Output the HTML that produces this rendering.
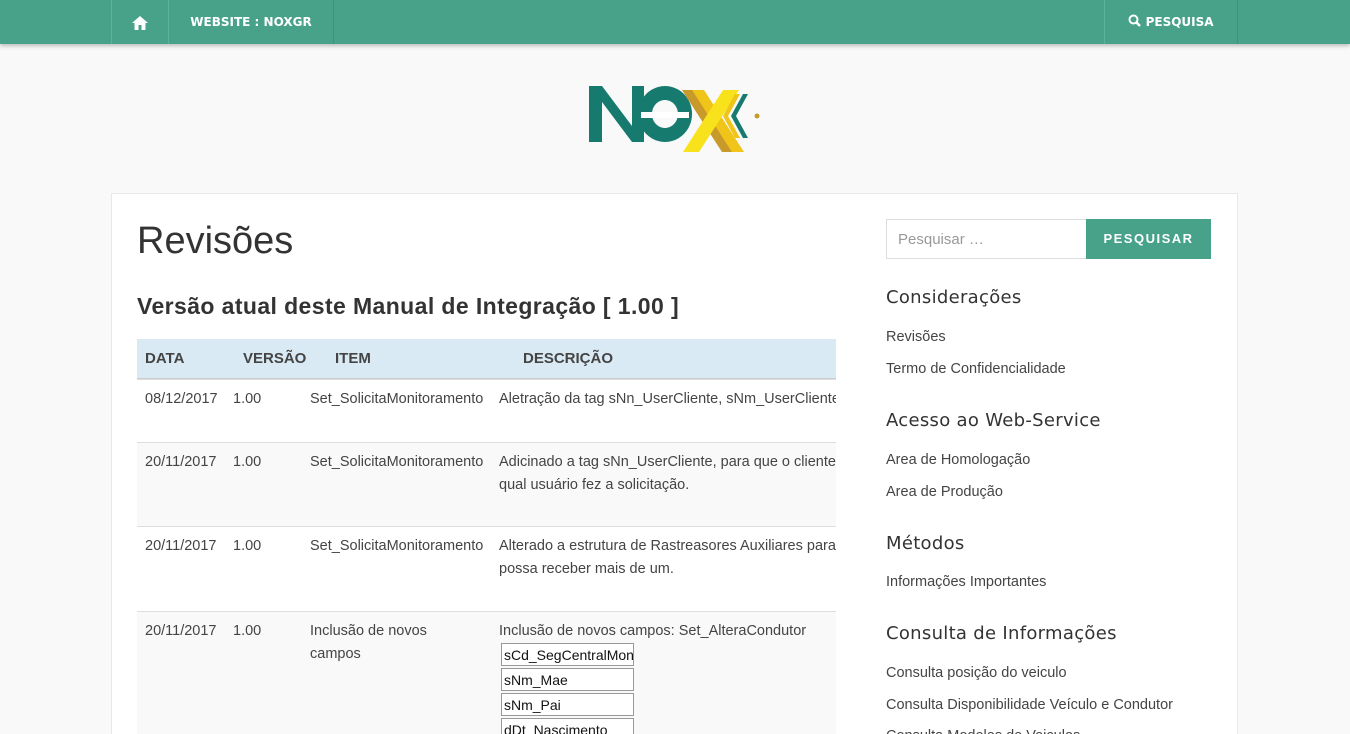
<!DOCTYPE html>
<html style="overflow:hidden;height:734px"><head><meta charset="utf-8">
<style>
body{margin:0;background:#f9f9f9;font-family:"Liberation Sans",sans-serif;color:#333;width:1350px;height:734px;overflow:hidden;position:relative}
.nav{position:absolute;left:0;top:0;width:1350px;height:44px;background:#48a28a;box-shadow:0 2px 4px rgba(0,0,0,.25);z-index:2}
.nav .it{position:absolute;top:0;height:44px;border-left:1px solid #5cb39c;border-right:1px solid #3d937c;color:#fff;font-weight:bold;font-size:13px;line-height:44px;text-align:center;font-family:"DejaVu Sans",sans-serif;font-size:12px}
.box{position:absolute;left:111px;top:193px;width:1125px;height:560px;background:#fff;border:1px solid #e8e8e8}
h1{position:absolute;left:137px;top:220px;margin:0;font-weight:normal;font-size:38px;color:#333}
h2{position:absolute;left:137px;top:293px;margin:0;font-size:23px;font-weight:bold;color:#333;letter-spacing:0.4px}
.tbl{position:absolute;left:137px;top:339px;width:699px;overflow:hidden;height:400px}
.row{position:relative;border-top:1px solid #ddd;font-size:14.5px;color:#444}
.row span{position:absolute;line-height:23px}
.hd{height:39px;background:#d9eaf4;font-weight:bold;font-size:15px;color:#444;border-bottom:1px solid #ccc;position:relative}
.hd span{position:absolute;top:11px}
.side{position:absolute;left:886px;font-size:14.5px;color:#444}
.sh{font-size:18px;color:#333;font-family:"DejaVu Sans",sans-serif;letter-spacing:0.3px}
.fld{position:absolute;left:501px;width:129px;height:21px;border:1px solid #999;background:#fff;font-size:14px;line-height:22px;padding-left:2px;overflow:hidden;white-space:nowrap;color:#111}
</style></head><body>
<div class="nav">
 <div class="it" style="left:111px;width:56px"><svg width="18" height="16" viewBox="0 0 18 16" style="vertical-align:middle"><path d="M9 1L1 8h2.5v7h4v-5h3v5h4V8H17z" fill="#fff"/></svg></div>
 <div class="it" style="left:168px;width:164px">WEBSITE : NOXGR</div>
 <div class="it" style="left:1104px;width:132px"><svg width="13" height="13" viewBox="0 0 13 13" style="vertical-align:-1px"><circle cx="5.5" cy="5.5" r="4" stroke="#fff" stroke-width="2" fill="none"/><path d="M8.5 8.5L12 12" stroke="#fff" stroke-width="2.5"/></svg> PESQUISA</div>
</div>
<svg style="position:absolute;left:585px;top:80px" width="180" height="78" viewBox="0 0 180 78">
 <path d="M4 6h13l30 40V6h12v56H47L17 22v40H4z" fill="#167a6e"/>
 <path d="M80 6a27 28 0 1 0 0.1 0zM80 20a13 14 0 1 1 -0.1 0z" fill="#167a6e" fill-rule="evenodd"/>
 <path d="M56 32h48v6H56z" fill="#fff"/>
 <path d="M97 10h16l40 62h-16z" fill="#c79a2a"/>
 <path d="M107 10h12l40 62h-12z" fill="#f0c419"/>
 <path d="M138 10h16l-40 62h-16z" fill="#f7e21c"/>
 <path d="M150 14l-12 22 12 22h5l-12-22 12-22z" fill="#f0c419"/>
 <path d="M158 14l-12 22 12 22h5l-12-22 12-22z" fill="#167a6e"/>
 <circle cx="172" cy="36" r="2.5" fill="#c79a2a"/>
</svg>
<div class="box"></div>
<h1>Revisões</h1>
<h2>Versão atual deste Manual de Integração [ 1.00 ]</h2>
<div class="tbl">
 <div class="hd"><span style="left:8px">DATA</span><span style="left:106px">VERSÃO</span><span style="left:198px">ITEM</span><span style="left:386px">DESCRIÇÃO</span></div>
 <div class="row" style="height:62px;background:#fff"><span style="left:8px;top:8px">08/12/2017</span><span style="left:96px;top:8px">1.00</span><span style="left:173px;top:8px">Set_SolicitaMonitoramento</span><span style="left:362px;top:8px;white-space:nowrap">Aletração da tag sNn_UserCliente, sNm_UserCliente</span></div>
 <div class="row" style="height:83px;background:#f9f9f9"><span style="left:8px;top:8px">20/11/2017</span><span style="left:96px;top:8px">1.00</span><span style="left:173px;top:8px">Set_SolicitaMonitoramento</span><span style="left:362px;top:8px;white-space:nowrap">Adicinado a tag sNn_UserCliente, para que o cliente<br>qual usuário fez a solicitação.</span></div>
 <div class="row" style="height:84px;background:#fff"><span style="left:8px;top:8px">20/11/2017</span><span style="left:96px;top:8px">1.00</span><span style="left:173px;top:8px">Set_SolicitaMonitoramento</span><span style="left:362px;top:8px;white-space:nowrap">Alterado a estrutura de Rastreasores Auxiliares para<br>possa receber mais de um.</span></div>
 <div class="row" style="height:200px;background:#f9f9f9"><span style="left:8px;top:8px">20/11/2017</span><span style="left:96px;top:8px">1.00</span><span style="left:173px;top:8px">Inclusão de novos<br>campos</span><span style="left:362px;top:8px;white-space:nowrap">Inclusão de novos campos: Set_AlteraCondutor</span></div>
</div>
<div class="fld" style="top:643px">sCd_SegCentralMonit</div>
<div class="fld" style="top:668px">sNm_Mae</div>
<div class="fld" style="top:693px">sNm_Pai</div>
<div class="fld" style="top:718px">dDt_Nascimento</div>
<div style="position:absolute;left:886px;top:219px;height:38px;border:1px solid #ddd;background:#fff;font-size:15px;color:#999;line-height:40px;padding-left:11px;width:188px">Pesquisar …</div>
<div style="position:absolute;left:1086px;top:219px;width:125px;height:40px;background:#48a28a;color:#fff;font-weight:bold;font-size:13px;letter-spacing:1.5px;line-height:40px;text-align:center">PESQUISAR</div>
<div class="side sh" style="top:287px">Considerações</div>
<div class="side" style="top:329px">Revisões</div>
<div class="side" style="top:361px">Termo de Confidencialidade</div>
<div class="side sh" style="top:410px">Acesso ao Web-Service</div>
<div class="side" style="top:452px">Area de Homologação</div>
<div class="side" style="top:484px">Area de Produção</div>
<div class="side sh" style="top:533px">Métodos</div>
<div class="side" style="top:574px">Informações Importantes</div>
<div class="side sh" style="top:623px">Consulta de Informações</div>
<div class="side" style="top:665px">Consulta posição do veiculo</div>
<div class="side" style="top:697px">Consulta Disponibilidade Veículo e Condutor</div>
<div class="side" style="top:728px">Consulta Modelos de Veiculos</div>
</body></html>
